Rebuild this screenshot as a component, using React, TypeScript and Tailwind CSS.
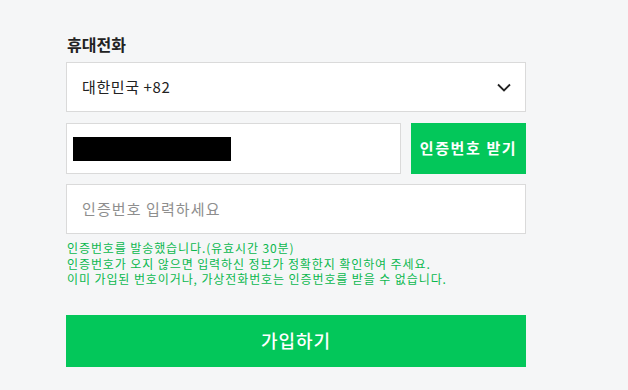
import React from "react";

export default function App() {
  return (
    <div className="w-[628px] h-[390px] bg-[#f5f6f7] overflow-hidden" style={{ fontFamily: '"Noto Sans CJK KR", "Noto Sans", sans-serif' }}>
      <div className="pl-[66px] w-[526px] pt-[33px]">
        <div className="text-[16px] font-bold text-[#222] leading-[22px] pl-[1px]">휴대전화</div>
        <div className="mt-[7px] h-[50px] bg-white border border-[#dadada] flex items-center justify-between pl-[15px] pr-[14px]">
          <span className="text-[15px] text-[#222] tracking-[0.6px]">대한민국 +82</span>
          <svg width="14" height="9" viewBox="0 0 14 9" fill="none">
            <path d="M1 1.5 L7 7.5 L13 1.5" stroke="#222" strokeWidth="1.8" />
          </svg>
        </div>
        <div className="mt-[11px] flex gap-[10px]">
          <div className="w-[335px] h-[51px] bg-white border border-[#dadada] flex items-center pl-[6px]">
            <div className="w-[158px] h-[24px] bg-black" />
          </div>
          <button className="w-[115px] h-[51px] bg-[#03c75a] text-white text-[15px] font-bold tracking-[1.6px]">인증번호 받기</button>
        </div>
        <div className="mt-[10px] h-[50px] bg-white border border-[#dadada] flex items-center pl-[15px]">
          <span className="text-[15px] text-[#8e8e8e] tracking-[1.1px]">인증번호 입력하세요</span>
        </div>
        <div className="mt-[6px] pl-[1px] text-[12px] leading-[15.5px] text-[#0ab84e] tracking-[0.9px]">
          <div>인증번호를 발송했습니다.(유효시간 30분)</div>
          <div>인증번호가 오지 않으면 입력하신 정보가 정확한지 확인하여 주세요.</div>
          <div>이미 가입된 번호이거나, 가상전화번호는 인증번호를 받을 수 없습니다.</div>
        </div>
        <button className="mt-[28px] w-[460px] h-[52px] bg-[#03c75a] text-white text-[18px] font-medium tracking-[1px]">가입하기</button>
      </div>
    </div>
  );
}
